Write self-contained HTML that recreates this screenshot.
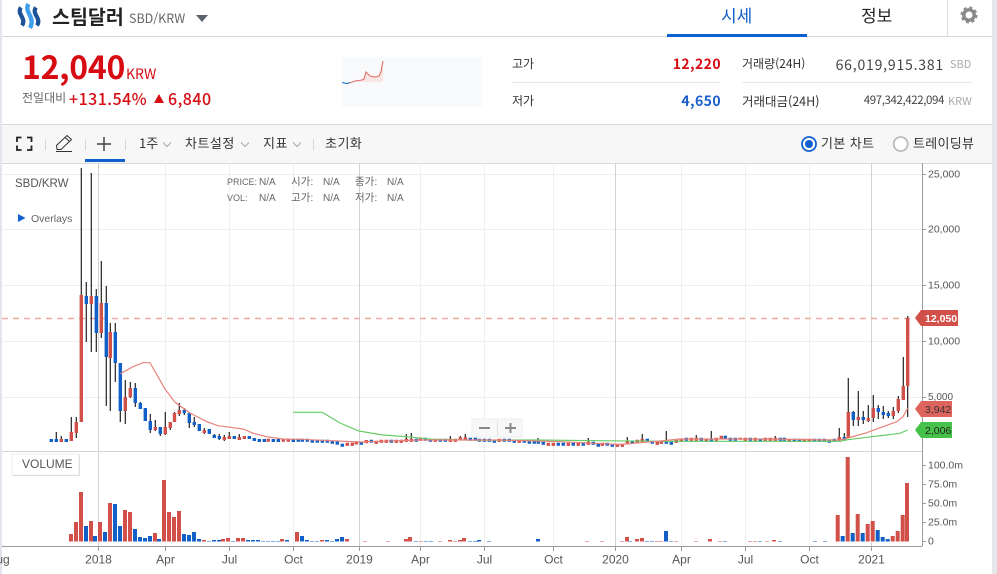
<!DOCTYPE html>
<html lang="ko"><head><meta charset="utf-8"><title>스팀달러</title>
<style>
html,body{margin:0;padding:0;background:#fff}
#p{position:relative;width:997px;height:574px;overflow:hidden;background:#fff;font-family:"Noto Sans CJK KR","Liberation Sans",sans-serif;color:#333}
#p div,#p span.a{position:absolute;white-space:nowrap}
.t{line-height:1}
</style></head><body><div id="p">
<div style="left:2px;top:124px;width:990px;height:38px;background:#f7f7f8;border-top:1px solid #d8d9dd;border-bottom:1px solid #d8d9dd"></div>
<div style="left:0;top:0;width:2px;height:574px;background:#e2e6ec"></div>
<div style="left:992px;top:0;width:5px;height:574px;background:#e6e8ee"></div>
<div style="left:2px;top:36px;width:990px;height:1px;background:#d4d6dc"></div>
<svg style="position:absolute;left:0;top:0" width="50" height="34"><path d="M21 7.500C16 14 27 18 22 25.500" fill="none" stroke="#1c5297" stroke-width="4.200"/><path d="M28.500 4C23.500 12 36 17 30 28" fill="none" stroke="#3f9fec" stroke-width="4.400"/><path d="M36 7.500C31 14 42 18 37 25.500" fill="none" stroke="#1c5297" stroke-width="4.200"/></svg>
<div class="t" style="left:52px;top:6px;font-size:19.500px;font-weight:700;color:#222">스팀달러</div>
<div class="t" style="left:129px;top:12px;font-size:12.500px;color:#666">SBD/KRW</div>
<div style="left:196px;top:15px;width:0;height:0;border-left:6.500px solid transparent;border-right:6.500px solid transparent;border-top:7px solid #5c6370"></div>
<div class="t" style="left:721px;top:6px;font-size:17px;color:#115fc8">시세</div>
<div style="left:667px;top:34px;width:140px;height:3px;background:#0f5fcf"></div>
<div class="t" style="left:861px;top:6px;font-size:17px;color:#222">정보</div>
<div style="left:947px;top:0;width:1px;height:36px;background:#dcdde1"></div>
<svg style="position:absolute;left:960px;top:6px" width="18" height="18"><circle cx="9" cy="9" r="5.200" fill="none" stroke="#8a8a8a" stroke-width="3.400"/><circle cx="9" cy="9" r="7.300" fill="none" stroke="#8a8a8a" stroke-width="2.400" stroke-dasharray="3 2.730"/></svg>

<div class="t" style="left:22px;top:50px;font-size:32px;font-weight:700;color:#d70b12;letter-spacing:-.3px">12,040</div>
<div class="t" style="left:126px;top:67px;font-size:14px;color:#d70b12">KRW</div>
<div class="t" style="left:22px;top:92px;font-size:12px;color:#666">전일대비</div>
<div class="t" style="left:69px;top:90px;font-size:16px;font-weight:500;color:#d70b12;letter-spacing:.45px">+131.54%</div>
<div style="left:154px;top:94px;width:0;height:0;border-left:5.500px solid transparent;border-right:5.500px solid transparent;border-bottom:9px solid #d70b12"></div>
<div class="t" style="left:168px;top:90px;font-size:16px;font-weight:500;color:#d70b12;letter-spacing:.45px">6,840</div>
<svg style="position:absolute;left:342px;top:57px" width="140" height="50"><rect width="140" height="50" fill="#f9fafc"/><path d="M8 25L13 24L20 23L22 22L24 15L28 19L33 20L37 19L39 15L41 4V25Z" fill="#f8e6e4"/><path d="M8 26L13 24L20 23L22 22L24 15L28 19L33 20L37 19L39 15L41 4" fill="none" stroke="#e0716b" stroke-width="1.100"/><path d="M0 25.500L5 26.500L8 25.500" fill="none" stroke="#1a6fd0" stroke-width="1.100"/></svg>

<div class="t" style="left:512px;top:58px;font-size:12px;color:#333">고가</div>
<div class="t" style="right:276px;top:57px;font-size:14px;font-weight:700;color:#d70b12;letter-spacing:.4px">12,220</div>
<div style="left:512px;top:82px;width:209px;height:1px;background:#e6e6ee"></div>
<div class="t" style="left:512px;top:95px;font-size:12px;color:#333">저가</div>
<div class="t" style="right:276px;top:94px;font-size:14px;font-weight:700;color:#1a5fcc;letter-spacing:.4px">4,650</div>
<div class="t" style="left:742px;top:58px;font-size:12px;color:#333">거래량(24H)</div>
<div class="t" style="right:53px;top:58px;font-size:14px;color:#444;letter-spacing:.8px">66,019,915.381</div>
<div class="t" style="left:950px;top:59px;font-size:11px;color:#aaa">SBD</div>
<div style="left:742px;top:82px;width:230px;height:1px;background:#e6e6ee"></div>
<div class="t" style="left:742px;top:95px;font-size:12.500px;color:#333">거래대금(24H)</div>
<div class="t" style="right:53px;top:95px;font-size:11.500px;color:#444;letter-spacing:-.4px">497,342,422,094</div>
<div class="t" style="left:948px;top:96px;font-size:11px;color:#aaa">KRW</div>

<svg style="position:absolute;left:0;top:125px" width="400" height="37">
<path d="M17 17V12.500H21.500M27 12.500H31.500V17M31.500 20.500V25H27M21.500 25H17V20.500" fill="none" stroke="#222" stroke-width="1.800"/>
<path d="M45.500 14V25M85.500 14V25M125.500 14V25M313.500 14V25" stroke="#d5d5d8"/>
<path d="M57 24.500L56.500 20.500L67 10.500L71.500 14.500L61 24.500ZM65 12.500L69.500 16.500M56 26.500H72" fill="none" stroke="#333" stroke-width="1"/>
<path d="M104 12V26M97 19H111" stroke="#444" stroke-width="1.500"/>
<rect x="85" y="34" width="40" height="3" fill="#0f5fcf"/>
<path d="M163 17.500L167 21.500L171 17.500M241 17.500L245 21.500L249 17.500M293 17.500L297 21.500L301 17.500" fill="none" stroke="#aaa"/>
</svg>
<div class="t" style="left:139px;top:136px;font-size:13px;color:#333">1주</div>
<div class="t" style="left:185px;top:136px;font-size:13px;color:#333;letter-spacing:.5px">차트설정</div>
<div class="t" style="left:263px;top:136px;font-size:13px;color:#333;letter-spacing:.5px">지표</div>
<div class="t" style="left:325px;top:136px;font-size:13px;color:#333;letter-spacing:.5px">초기화</div>
<svg style="position:absolute;left:800px;top:135px" width="110" height="18"><circle cx="9" cy="9" r="7" fill="#fff" stroke="#1060d0" stroke-width="1.800"/><circle cx="9" cy="9" r="4" fill="#1060d0"/><circle cx="100.700" cy="9" r="7" fill="#fff" stroke="#bbb" stroke-width="1.800"/></svg>
<div class="t" style="left:821px;top:136px;font-size:13px;color:#333;letter-spacing:.4px">기본 차트</div>
<div class="t" style="left:913px;top:136px;font-size:13px;color:#333;letter-spacing:.3px">트레이딩뷰</div>

<svg style="position:absolute;left:0;top:0;font-family:'Liberation Sans',sans-serif" width="997" height="574">
<path d="M2 174.500H922M2 229.500H922M2 285.500H922M2 341.500H922M2 397.500H922" stroke="#efeff1"/>
<path d="M165.500 163V546M229.500 163V546M293.500 163V546M420.500 163V546M484.500 163V546M553.500 163V546M681.500 163V546M745.500 163V546M809.500 163V546" stroke="#efeff1"/>
<path d="M98.500 163V546M359.500 163V546M615.500 163V546M871.500 163V546" stroke="#d2d2d4"/>
<path d="M2 451.500H922" stroke="#d4d4d6"/>
<path d="M2 546.500H922.500M922.500 163V546" stroke="#9c9c9c" fill="none"/>
<path d="M98.500 546V551M165.500 546V551M229.500 546V551M293.500 546V551M359.500 546V551M420.500 546V551M484.500 546V551M553.500 546V551M615.500 546V551M681.500 546V551M745.500 546V551M809.500 546V551M871.500 546V551M922 174.500H926M922 229.500H926M922 285.500H926M922 341.500H926M922 397.500H926M922 465.500H926M922 484.500H926M922 503.500H926M922 522.500H926M922 541.500H926" stroke="#9c9c9c"/>
<path d="M2 318.500H915" stroke="#f0aaa4" stroke-width="1.400" stroke-dasharray="6 5"/>

<!-- wicks -->
<path fill="none" stroke="#222" stroke-width="1.200" d="M56.300 432V439M61.300 436V439M71.300 417V441M76.300 417V438M81.300 168V422M86.300 282V342M91.300 173V352M96.300 289V352M101.300 261V338M106.300 286V406M110.300 323V411M115.300 323V382M120.300 363V422M125.300 380V424M130.300 382V398M135.300 383V407M140.300 402V409M145.300 408V421M150.300 414V433M155.300 420V431M160.300 427V436M165.300 412V435M170.300 422V430M174.500 412V422M179.300 403V416M184.300 408V415M189.300 412V428M194.300 417V427M204.300 428V434M214.300 434V438M219.300 434V440M224.300 435V441M229.300 432V439M239.300 434V440M406.300 434V439M411.300 433V439M450.300 436V439M460.300 436V439M465.300 434V439M538 438V440M627.300 437V442M637.300 440V443M642.300 434V442M666.300 431V442M696.300 435V440M711.300 431V441M588.300 438V442M775.300 436V440M839.300 428V441M844.300 433V441M848.300 378V438M853.300 411V426M858.300 391V426M863.300 411V424M868.300 405V422M873.300 395V422M878.300 405V419M883.300 406V419M888.300 411V418M893.300 407V419M898.300 396V413M903.300 357V400M907.700 316V417"/>
<!-- red bodies -->
<path fill="none" stroke="#d2504a" stroke-width="3.400" d="M61.300 439V442M71.300 432V441M76.300 422V433M81.300 295V422M91.300 296V304M101.300 303V333M110.300 332V358M125.300 397V411M130.300 388V397M155.300 427V430M165.300 427V434M170.300 422V428M174.500 413V422M179.300 410V414M204.300 430V433M224.300 437V440M229.300 436V439M239.300 437V440M244.300 436V439M268.300 438.700v3M283.300 438.700v3M288.300 438.700v3M347.300 442.700v3.200M352.300 442.700v3.200M356.300 441.300v3.200M366.300 440v3.200M376.300 440.700v3.200M381.300 439.700v3.200M386.300 439.700v3.200M396.300 439.700v3.200M401.300 439.700v3.200M406.300 438.700v3.200M411.300 438.700v3.200M420.300 437.700v3.200M435.300 438.700v3.200M450.300 438.700v3.200M455.300 438.700v3.200M460.300 437.300v3.200M465.300 437.300v3.200M499.300 438.700v3.200M519.300 439.700v3.200M548.300 442.700v3.200M553.300 442.700v3.200M568.300 442.700v3.200M578.300 442.700v3.200M588.300 441.700v3.200M602.300 442.700v3.200M617.300 443.700v3.200M622.300 443.700v3.200M627.300 440.700v3.200M637.300 439.700v3.200M642.300 438.700v3.200M657.300 441.700v3.200M661.300 440.700v3.200M676.300 439.700v3.200M681.300 438.700v3.200M691.300 437.700v3.200M696.300 437.700v3.200M706.300 438.700v3.200M716.300 437.700v3.200M721.300 435.700v3.200M740.300 437.700v2M745.300 437.700v3.200M755.300 437.700v3.200M765.300 437.700v3.200M770.300 437.700v3.200M775.300 437.700v3.200M789.300 438.700v3.200M804.300 438.700v3.200M809.300 438.700v3.200M839.300 437V440M848.300 412V438M858.300 417V420M868.300 418V421M873.300 408V418M893.300 411V416M898.300 399V411M903.300 386V400M907.700 318V386"/>
<!-- blue bodies -->
<path fill="none" stroke="#1060c8" stroke-width="3.400" d="M51.300 439V442M56.300 439V442M66.300 439V442M86.300 296V304M96.300 296V333M106.300 303V357M115.300 332V363M120.300 363V411M135.300 388V403M140.300 403V409M145.300 408V421M150.300 421V430M160.300 427V434M184.300 410V413M189.300 413V423M194.300 422V425M199.300 424V431M209.300 429V434M214.300 435V438M219.300 436V439M234.300 436V439M249.300 436V439M254.300 438V441M259.300 439V442M264.300 439V442M273.300 439V442M278.300 439V442M293.300 439V442M298.300 438.700v3M302.300 438.700v3M307.300 438.700v3M312.300 439.700v3M317.300 439.700v3M322.300 439.700v3M327.300 439.700v3M332.300 440.700v3M337.300 441.300v3.500M342.300 443.700v3M361.300 441.700v3M371.300 439.700v3M391.300 439.700v3M416.300 438.700v3M425.300 437.700v3M430.300 438.700v3M440.300 438.700v3M445.300 438.700v3M470.300 437.700v3M475.300 437.700v3M479.300 438.700v3M484.300 438.700v3M489.300 438.700v3M494.300 439.700v3M504.300 438.700v3M509.300 438.700v3M514.300 439.700v3M524.300 439.700v3M529.300 440.700v3M534.300 440.700v3M538.300 440.700v3M543.300 441.700v3M558.300 442.700v3M563.300 442.700v3M573.300 442.700v3M583.300 442.700v3M593.300 441.700v3M598.300 443.700v3M607.300 442.700v3M612.300 443.700v3M632.300 440.700v3M647.300 438.700v3M652.300 440.700v3M666.300 440.700v3M671.300 441.700v3M686.300 437.700v3M701.300 437.700v3M711.300 438.700v3M725.300 435.700v3M730.300 437.700v3M735.300 437.700v3M750.300 437.700v3M760.300 438.700v3M780.300 437.700v3M784.300 437.700v3M794.300 438.700v3M799.300 438.700v3M814.300 438.700v3M819.300 438.700v3M824.300 438.700v3M829.300 439.700v3M834.300 438.700v3M844.300 437V439.700M853.300 412V420M863.300 417V420M878.300 408V412M883.300 412V415M888.300 413V416"/>
<!-- MA lines -->
<path fill="none" stroke="#66cc66" stroke-width="1.200" d="M293 412.300H322.300L340 423L359 431L383 435L406.700 436.700L433 439.300L480 440.300L533 440L597 440.700L660 441.300L750 441.300L840 441.300L848 439.700L866.700 437.300L886.700 435L900 433.300L907.700 430"/>
<path fill="none" stroke="#e8827c" stroke-width="1.200" d="M120.300 373.700L133 366.700L143 362.700H150L165 389L175 402.300L190 413L206.700 421.700L218 425.700L233 427.700L243 429L253.300 433.300L266.700 436.700L283 439L300 439.300L360 442L420 440L500 440L560 441.700L620 444.500L660 441L680 439L760 439L840 440L848 438L866.700 432.700L883 426.700L896.700 421.700L903 416.700L907.700 408.300"/>
<!-- volume -->
<path fill="none" stroke="#d2504a" stroke-width="4" d="M71 534V542M76 522V542M81 492V542M91 521V542M100 522V542M110 503V542M125 510V542M130 512V542M155 533V542M164 480V542M169 512V542M174 517V542M179 511V542M204 540V542M223 539V542M228 538V542M238 538V542M243 538V542M282 539V542M297 532V542M322 540V542M347 539V542M406 539V542M410 537V542M450 540V542M460 540V542M464 538V542M627 537V542M637 539V542M642 538V542M710 539V542M774 540V542M837.700 515V542M847.700 457V542M857.700 514V542M867.700 524V542M872.700 521V542M892.700 536V542M897.700 531V542M902.700 515V542M907 483V542"/>
<path fill="none" stroke="#1060c8" stroke-width="4" d="M86 526V542M95 536V542M105 532V542M115 504V542M120 526V542M135 529V542M140 537V542M145 538V542M150 536V542M159 539V542M184 534V542M189 535V542M194 532V542M199 539V542M214 540V542M219 540V542M248 540V542M253 540V542M258 540V542M287 540V542M302 536V542M307 540V542M327 540V542M337 539V542M342 537V542M479 540V542M538 539V542M666 531V542M842.700 536V542M852.700 533V542M862.700 533V542M877.700 530V542M882.700 537V542M887.700 539V542"/>
<path fill="none" stroke="#d2504a" stroke-width="4" d="M365 541V542M421 541V542M455 541V542M587 541V542M602 541V542M622 541V542M657 541V542M661 541V542M676 541V542M696 541V542M720 541V542M750 541V542M755 541V542M767 541V542M388 541V542M440 541V542"/>
<path fill="none" stroke="#1060c8" stroke-width="4" d="M209 541V542M233 541V542M263 541V542M268 541V542M273 541V542M278 541V542M312 541V542M317 541V542M332 541V542M416 541V542M426 541V542M431 541V542M470 541V542M475 541V542M489 541V542M630 541V542M647 541V542M652 541V542M671 541V542M725 541V542M760 541V542M780 541V542M815 541V542M825 541V542"/>
<rect x="2" y="541" width="920" height="1" fill="#fff" opacity=".5"/>

<!-- tags -->
<path d="M915 318L921 310H958V326H921Z" fill="#d2504a"/>
<path d="M915 409L921 401H952V417H921Z" fill="#dc645c"/>
<path d="M915 430L921 422H952V438H921Z" fill="#46c24a"/>
<g font-size="10.500" fill="#555">
<text x="928" y="177.500">25,000</text>
<text x="928" y="232.500">20,000</text>
<text x="928" y="288.500">15,000</text>
<text x="928" y="344.500">10,000</text>
<text x="928" y="400" font-size="10">5,000</text>
<text x="928" y="468.500">100.0m</text>
<text x="928" y="487.500">75.0m</text>
<text x="928" y="506.500">50.0m</text>
<text x="928" y="525.500">25.0m</text>
<text x="928" y="544.500">0</text>
</g>
<text x="925" y="322" font-size="10.500" font-weight="700" fill="#fff">12,050</text>
<text x="925" y="413" font-size="10.500" fill="#333">3,942</text>
<text x="925" y="434" font-size="10.500" fill="#222">2,006</text>

<g font-size="12" fill="#555" text-anchor="middle">
<text x="3" y="563.500">ug</text><text x="98.500" y="563.500">2018</text><text x="165.500" y="563.500">Apr</text><text x="229.500" y="563.500">Jul</text><text x="293.500" y="563.500">Oct</text><text x="359.500" y="563.500">2019</text><text x="420.500" y="563.500">Apr</text><text x="484.500" y="563.500">Jul</text><text x="553.500" y="563.500">Oct</text><text x="615.500" y="563.500">2020</text><text x="681.500" y="563.500">Apr</text><text x="745.500" y="563.500">Jul</text><text x="809.500" y="563.500">Oct</text><text x="871.500" y="563.500">2021</text>
</g>
<text x="15" y="187" font-size="11.500" fill="#555">SBD/KRW</text>
<path d="M18 214L25.500 218L18 222Z" fill="#1060d0"/>
<text x="31" y="222" font-size="10.500" fill="#666">Overlays</text>
<g font-size="9" fill="#666" font-family="'Liberation Sans','Noto Sans CJK KR',sans-serif">
<text x="227" y="185">PRICE:</text><text x="259" y="185" font-size="10">N/A</text><text x="291" y="185" font-size="10.500">시가:</text><text x="323" y="185" font-size="10">N/A</text><text x="355" y="185" font-size="10.500">종가:</text><text x="387" y="185" font-size="10">N/A</text>
<text x="227" y="201">VOL:</text><text x="259" y="201" font-size="10">N/A</text><text x="291" y="201" font-size="10.500">고가:</text><text x="323" y="201" font-size="10">N/A</text><text x="355" y="201" font-size="10.500">저가:</text><text x="387" y="201" font-size="10">N/A</text>
</g>
<rect x="472" y="419" width="50" height="18" fill="#f8f8f8" stroke="#eee"/>
<path d="M497.500 420V436" stroke="#e2e2e2"/>
<path d="M479 428H490M505 428H516M510.500 423V433" stroke="#8a8a8a" stroke-width="2" fill="none"/>
<rect x="12" y="454" width="67" height="21" fill="#fff" stroke="#eee"/>
<path d="M13 475.500H79.500V455" fill="none" stroke="#ddd"/>
<text x="22" y="468" font-size="12" fill="#555">VOLUME</text>
</svg>
</div></body></html>
